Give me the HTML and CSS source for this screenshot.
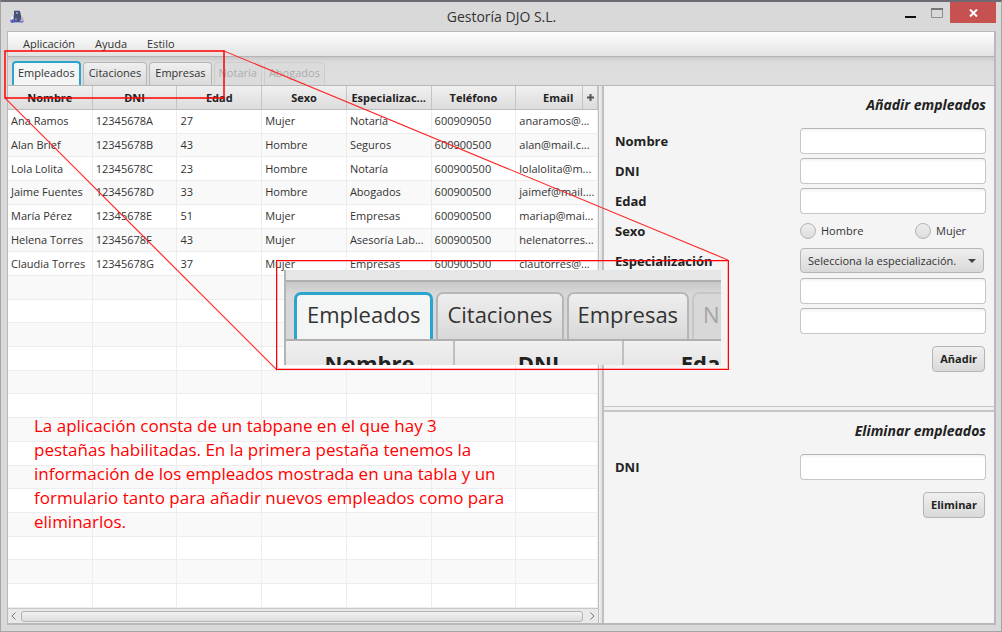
FILE: index.html
```
<!DOCTYPE html>
<html lang="es">
<head>
<meta charset="utf-8">
<title>Gestoría DJO S.L.</title>
<link rel="stylesheet" href="styles.css">
</head>
<body>
<div class="window">
  <header class="titlebar">
    <svg class="app-icon" viewBox="0 0 14 15" aria-hidden="true">
      <path d="M4 1h5l1 4 3 4 1 4-3 1H2l-2-1 1-4 3-4z" fill="#a9afd6"/>
      <path d="M4 2h6l1 5v6H4V6z" fill="#4a5274"/>
      <path d="M6 3h2v2H6z" fill="#8696bc"/>
      <path d="M5 9h2v3H5z" fill="#6982ab"/>
      <circle cx="2.500" cy="12" r="2" fill="#625bc4"/>
      <circle cx="11.500" cy="12" r="2" fill="#8781cf"/>
      <path d="M1 8l2-1v3l-2 1z" fill="#eef0fb"/>
      <path d="M11 9l2 1v2h-2z" fill="#d5a9a9"/>
    </svg>
    <h1 class="title">Gestoría DJO S.L.</h1>
    <div class="controls">
      <button class="control minimize" aria-label="Minimizar"><svg width="11" height="3"><path d="M0 2h11" stroke="#111" stroke-width="2"/></svg></button>
      <button class="control maximize" aria-label="Maximizar"><svg width="12" height="10"><path d="M.5 1v8.500h11V1" fill="none" stroke="#8e8e8e"/><path d="M0 1h12" stroke="#777" stroke-width="2"/></svg></button>
      <button class="control close" aria-label="Cerrar"><svg width="9" height="8"><path d="M1 .5l7 7M8 .5l-7 7" stroke="#fff" stroke-width="2"/></svg></button>
    </div>
  </header>
  <main class="client">
    <nav class="menubar">
      <button class="menu">Aplicación</button>
      <button class="menu">Ayuda</button>
      <button class="menu">Estilo</button>
    </nav>
    <div class="tabs" role="tablist">
      <button class="tab selected" role="tab" aria-selected="true">Empleados</button>
      <button class="tab" role="tab">Citaciones</button>
      <button class="tab" role="tab">Empresas</button>
      <button class="tab" role="tab" disabled>Notaría</button>
      <button class="tab" role="tab" disabled>Abogados</button>
    </div>
    <div class="split">
      <section class="list">
        <div class="table-area">
          <table class="grid">
            <colgroup><col class="col"><col class="col"><col class="col"><col class="col"><col class="col"><col class="col"><col></colgroup>
            <thead>
              <tr><th>Nombre</th><th>DNI</th><th>Edad</th><th>Sexo</th><th>Especializac...</th><th>Teléfono</th><th><div class="last-head"><span class="last-name">Email</span><button class="plus" aria-label="Columnas"><svg width="7" height="7"><path d="M3.500 0v7M0 3.500h7" stroke="#555" stroke-width="2"/></svg></button></div></th></tr>
            </thead>
            <tbody>
              <tr><td>Ana Ramos</td><td>12345678A</td><td>27</td><td>Mujer</td><td>Notaría</td><td>600909050</td><td>anaramos@...</td></tr>
              <tr><td>Alan Brief</td><td>12345678B</td><td>43</td><td>Hombre</td><td>Seguros</td><td>600900500</td><td>alan@mail.c...</td></tr>
              <tr><td>Lola Lolita</td><td>12345678C</td><td>23</td><td>Hombre</td><td>Notaría</td><td>600900500</td><td>lolalolita@m...</td></tr>
              <tr><td>Jaime Fuentes</td><td>12345678D</td><td>33</td><td>Hombre</td><td>Abogados</td><td>600900500</td><td>jaimef@mail....</td></tr>
              <tr><td>María Pérez</td><td>12345678E</td><td>51</td><td>Mujer</td><td>Empresas</td><td>600900500</td><td>mariap@mai...</td></tr>
              <tr><td>Helena Torres</td><td>12345678F</td><td>43</td><td>Mujer</td><td>Asesoría Lab...</td><td>600900500</td><td>helenatorres...</td></tr>
              <tr><td>Claudia Torres</td><td>12345678G</td><td>37</td><td>Mujer</td><td>Empresas</td><td>600900500</td><td>clautorres@...</td></tr>
              <tr><td></td><td></td><td></td><td></td><td></td><td></td><td></td></tr>
              <tr><td></td><td></td><td></td><td></td><td></td><td></td><td></td></tr>
              <tr><td></td><td></td><td></td><td></td><td></td><td></td><td></td></tr>
              <tr><td></td><td></td><td></td><td></td><td></td><td></td><td></td></tr>
              <tr><td></td><td></td><td></td><td></td><td></td><td></td><td></td></tr>
              <tr><td></td><td></td><td></td><td></td><td></td><td></td><td></td></tr>
              <tr><td></td><td></td><td></td><td></td><td></td><td></td><td></td></tr>
              <tr><td></td><td></td><td></td><td></td><td></td><td></td><td></td></tr>
              <tr><td></td><td></td><td></td><td></td><td></td><td></td><td></td></tr>
              <tr><td></td><td></td><td></td><td></td><td></td><td></td><td></td></tr>
              <tr><td></td><td></td><td></td><td></td><td></td><td></td><td></td></tr>
              <tr><td></td><td></td><td></td><td></td><td></td><td></td><td></td></tr>
              <tr><td></td><td></td><td></td><td></td><td></td><td></td><td></td></tr>
              <tr><td></td><td></td><td></td><td></td><td></td><td></td><td></td></tr>
            </tbody>
          </table>
        </div>
        <div class="scrollbar">
          <svg width="5" height="8" aria-hidden="true"><path d="M4.500 .5L1 4l3.500 3.500" fill="none" stroke="#777"/></svg>
          <div class="thumb"></div>
          <svg width="5" height="8" aria-hidden="true"><path d="M.5 .5L4 4 .5 7.500" fill="none" stroke="#777"/></svg>
        </div>
      </section>
      <div class="divider"></div>
      <div class="forms">
        <form class="form add">
          <h2 class="heading">Añadir empleados</h2>
          <div class="fields">
            <label class="label" for="nombre">Nombre</label><input class="text" id="nombre" type="text">
            <label class="label" for="dni">DNI</label><input class="text" id="dni" type="text">
            <label class="label" for="edad">Edad</label><input class="text" id="edad" type="text">
            <span class="label" id="sexo">Sexo</span>
            <div class="radios" role="radiogroup" aria-labelledby="sexo">
              <label class="option"><input class="radio" type="radio" name="sexo">Hombre</label>
              <label class="option"><input class="radio" type="radio" name="sexo">Mujer</label>
            </div>
            <label class="label" for="esp">Especialización</label>
            <div class="combo">
              <select class="select" id="esp"><option>Selecciona la especialización.</option></select>
              <svg class="arrow" width="8" height="4" aria-hidden="true"><path d="M0 0h8L4 4z" fill="#444"/></svg>
            </div>
            <input class="text second" type="text" aria-label="Teléfono">
            <input class="text second" type="text" aria-label="Email">
          </div>
          <button class="button" type="button">Añadir</button>
        </form>
        <div class="hdivider"></div>
        <form class="form">
          <h2 class="heading">Eliminar empleados</h2>
          <div class="fields">
            <label class="label" for="dni-del">DNI</label><input class="text" id="dni-del" type="text">
          </div>
          <button class="button" type="button">Eliminar</button>
        </form>
      </div>
    </div>
  </main>
  <svg class="callout-lines" width="730" height="372" aria-hidden="true">
    <path d="M224 50.400L728 259.400V260.600L224 51.600z" fill="#f22"/>
    <path d="M5 97.200L277 369.200V370.800L5 98.800z" fill="#f22"/>
    <rect x="5" y="51" width="219" height="47" stroke="#f00" stroke-width="1.500" fill="none"/>
  </svg>
  <aside class="magnifier">
    <div class="lens">
      <div class="lens-menu"></div>
      <div class="lens-tabs">
        <span class="lens-tab lens-selected">Empleados</span>
        <span class="lens-tab">Citaciones</span>
        <span class="lens-tab">Empresas</span>
        <span class="lens-tab lens-disabled">Notaría</span>
      </div>
      <div class="lens-head"><b class="lens-cell">Nombre</b><b class="lens-cell">DNI</b><b class="lens-cell">Edad</b></div>
    </div>
  </aside>
  <p class="note">La aplicación consta de un tabpane en el que hay 3<br>pestañas habilitadas. En la primera pestaña tenemos la<br>información de los empleados mostrada en una tabla y un<br>formulario tanto para añadir nuevos empleados como para<br>eliminarlos.</p>
</div>
</body>
</html>
```
FILE: styles.css
```
* { box-sizing: border-box; }
body { margin: 0; font: 12px/16px "Open Sans", "Noto Sans", sans-serif; color: #333; }
button, input, select { font: inherit; color: inherit; margin: 0; }
h1, h2, p { margin: 0; }

.window { position: relative; display: flex; flex-direction: column; height: 100vh; min-height: 600px; padding: 0 5px 6px 6px; background: #d9d9d9; border: 1px solid #a5a5a5; border-top: 2px solid #6f6a72; }
.titlebar { display: grid; grid-template-columns: 1fr auto 1fr; align-items: center; height: 29px; flex: none; }
.app-icon { width: 14px; height: 15px; margin-left: 3px; }
.title { font-size: 14px; line-height: 20px; font-weight: 400; }
.controls { display: flex; justify-content: flex-end; align-self: start; }
.control { display: flex; align-items: center; justify-content: center; height: 21px; padding: 0; border: 0; background: none; }
.minimize { width: 26px; align-items: flex-end; padding-bottom: 5px; }
.maximize { width: 27px; }
.close { width: 46px; background: #c75050; }

.client { display: flex; flex-direction: column; flex: 1; min-height: 0; border: 1px solid #b9b9b9; border-right-width: 2px; border-bottom-width: 2px; }
.menubar { display: flex; gap: 20px; height: 25px; padding: 0 15px; border-bottom: 1px solid #b4b4b4; background: linear-gradient(#fdfdfd, #e3e3e3); flex: none; }
.menu { padding: 0; border: 0; background: none; font-size: 11px; }
.tabs { display: flex; align-items: flex-end; gap: 2px; height: 29px; padding: 0 4px; border-bottom: 1px solid #b8b8b8; background: linear-gradient(#c9c9c9, #dcdcdc 5px, #dedede); flex: none; }
.tab { height: 23px; padding: 0 5px 2px; border: 1px solid #b6b6b6; border-bottom: 0; border-radius: 4px 4px 0 0; background: linear-gradient(#efefef, #dadada); font-size: 11px; line-height: 18px; }
.selected { height: 24px; padding: 0 4px 3px; border: 2px solid #2aa5cd; border-bottom: 0; background: #f4f5f5; }
.tab:disabled { padding: 0 4px 2px; color: #adadad; border-color: #cdcdcd; background: #dbdbdb; }

.split { display: flex; flex: 1; min-height: 0; }
.list { display: flex; flex-direction: column; flex: 590; min-width: 0; background: #fff; }
.table-area { flex: 1; min-height: 0; }
.grid { width: 100%; height: 100%; table-layout: fixed; border-collapse: separate; border-spacing: 0; font-size: 11px; line-height: 14px; }
.col { width: 14.36%; }
.grid th { height: 24px; padding: 0 3px; border-right: 1px solid #c4c4c4; border-bottom: 1px solid #bdbdbd; background: linear-gradient(#f0f0f0, #dcdcdc); color: #222; white-space: nowrap; overflow: hidden; }
.grid th:last-child { padding: 0; }
.last-head { display: flex; height: 23px; align-items: center; }
.last-name { flex: 1; padding-left: 18px; }
.plus { display: flex; align-items: center; justify-content: center; width: 15px; height: 23px; padding: 0; border: 0; border-left: 1px solid #c4c4c4; background: none; }
.grid td { height: 23px; padding: 0 3px; border-right: 1px solid #ededed; border-bottom: 1px solid #ededed; white-space: nowrap; overflow: hidden; }
.grid tbody tr:nth-child(even) { background: #f9f9f9; }
.scrollbar { display: flex; align-items: center; gap: 5px; height: 15px; padding: 0 3px; border-top: 1px solid #c8c8c8; background: #e9e9e9; flex: none; }
.thumb { flex: 1; height: 11px; margin-right: 2px; border: 1px solid #b5b5b5; border-radius: 3px; background: linear-gradient(#f2f2f2, #dcdcdc); }
.divider { width: 6px; border: solid #c0c0c0; border-width: 0 2px 0 1px; background: linear-gradient(90deg, #f0f0f0, #dfdfdf); flex: none; }

.forms { display: flex; flex-direction: column; flex: 390; min-width: 0; background: #f4f4f4; }
.form { padding: 9px 8px 10px 11px; }
.add { height: 320px; }
.hdivider { height: 6px; border: solid #c6c6c6; border-width: 1px 0 2px; background: #f0f0f0; flex: none; }
.heading { margin-bottom: 13px; color: #222; font-size: 14px; line-height: 20px; font-style: italic; font-weight: 700; text-align: right; }
.fields { display: grid; grid-template-columns: 1fr 186px; grid-auto-rows: 25px; gap: 5px 0; align-items: center; }
.label { color: #222; font-size: 13px; line-height: 20px; font-weight: 700; }
.text { width: 100%; height: 26px; padding: 0 6px; border: 1px solid #c6c6c6; border-top-color: #b5b5b5; border-radius: 4px; background: linear-gradient(#f3f3f3, #fff 4px); }
.second { grid-column: 2; }
.radios { display: grid; grid-template-columns: 115px 1fr; }
.option { display: flex; align-items: center; gap: 5px; font-size: 11px; }
.radio { appearance: none; width: 16px; height: 16px; border: 1px solid #b3b3b3; border-radius: 50%; background: linear-gradient(#eee, #dcdcdc); }
.combo { position: relative; width: 184px; }
.select { display: block; width: 100%; height: 25px; padding: 0 7px; border: 1px solid #b5b5b5; border-radius: 4px; background: linear-gradient(#efefef, #d9d9d9); appearance: none; font-size: 11px; }
.arrow { position: absolute; right: 8px; top: 11px; pointer-events: none; }
.button { display: block; height: 26px; margin: 13px 1px 0 auto; padding: 0 7px; border: 1px solid #b5b5b5; border-radius: 4px; background: linear-gradient(#f0f0f0, #d9d9d9); color: #222; font-size: 11px; font-weight: 700; }

.callout-lines { position: absolute; left: -1px; top: -2px; pointer-events: none; }
.magnifier { position: absolute; left: 275px; top: 258px; width: 453px; height: 110px; padding: 9px 7px 5px; border: 1px solid #f00; box-shadow: inset 0 0 0 1px #ff000044; }
.lens { display: flex; flex-direction: column; height: 95px; overflow: hidden; border-left: 2px solid #b4b4b4; background: #ddd; }
.lens-menu { height: 12px; border-bottom: 2px solid #b0b0b0; background: #e6e6e6; flex: none; }
.lens-tabs { display: flex; align-items: flex-end; gap: 3px; height: 59px; padding-left: 8px; border-bottom: 2px solid #b0b0b0; background: linear-gradient(#c8c8c8, #d8d8d8 12px, #d8d8d8); flex: none; }
.lens-tab { height: 47px; padding: 0 9px; border: 2px solid #b6b6b6; border-bottom: 0; border-radius: 7px 7px 0 0; background: linear-gradient(#efefef, #d8d8d8); font-size: 22px; line-height: 40px; }
.lens-selected { padding: 0 10px; border: 3px solid #2aa5cd; border-bottom: 0; background: #f4f5f5; line-height: 38px; }
.lens-disabled { color: #a5a5a5; border-color: #c6c6c6; background: #d8d8d8; }
.lens-head { display: flex; height: 48px; flex: none; }
.lens-cell { width: 169px; flex: none; border-right: 2px solid #c0c0c0; background: linear-gradient(#f0f0f0, #dcdcdc); color: #222; font-size: 22px; line-height: 44px; text-align: center; }
.note { position: absolute; left: 33px; top: 412px; color: #f00; font: 17px/24px "Open Sans", sans-serif; white-space: nowrap; }
```
